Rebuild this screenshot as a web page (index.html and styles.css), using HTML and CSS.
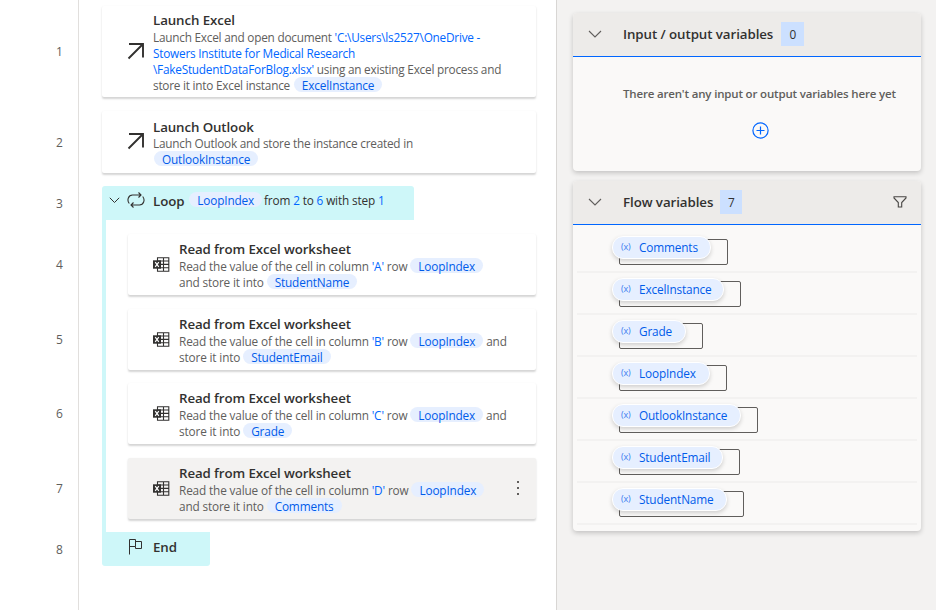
FILE: index.html
```html
<!DOCTYPE html>
<html lang="en">
<head>
<meta charset="utf-8">
<title>Flow designer</title>
<link rel="stylesheet" href="styles.css">
</head>
<body>
<svg class="defs" width="0" height="0" aria-hidden="true">
  <symbol id="arrow" viewBox="0 0 18 18"><path d="M2 2H16V15.5M16 2L1.5 16.5" fill="none" stroke="#323130" stroke-width="1.9"/></symbol>
  <symbol id="excel" viewBox="0 0 17 15"><path d="M4.5.7H15.8V14.2H4.5ZM4.5 4H15.8M4.5 7.4H15.8M4.5 10.8H15.8M10.5.7V14.2" fill="none" stroke="#323130" stroke-width="1.1"/><path d="M0 3.3H8V11.7H0Z" fill="#323130"/><path d="M2.2 5.2L5.8 9.8M5.8 5.2L2.2 9.8" stroke="#fff" stroke-width="1.2"/></symbol>
  <symbol id="chevron" viewBox="0 0 14 8"><path d="M1 1L7 7L13 1" fill="none" stroke="#605e5c" stroke-width="1.1"/></symbol>
</svg>
<div class="app">
  <main class="flow">
    <div class="row"><span class="num">1</span>
      <section class="card first"><svg class="arrow"><use href="#arrow"/></svg>
        <div class="text"><h3>Launch Excel</h3>
          <p>Launch Excel and open document <b>'C:\Users\ls2527\OneDrive -</b></p>
          <p><b>Stowers Institute for Medical Research</b></p>
          <p><b>\FakeStudentDataForBlog.xlsx'</b> using an existing Excel process and</p>
          <p>store it into Excel instance <span class="pill">ExcelInstance</span></p></div>
      </section></div>
    <div class="row"><span class="num">2</span>
      <section class="card second"><svg class="arrow"><use href="#arrow"/></svg>
        <div class="text"><h3>Launch Outlook</h3>
          <p>Launch Outlook and store the instance created in</p>
          <p><span class="pill">OutlookInstance</span></p></div>
      </section></div>
    <div class="row loop-row"><span class="num">3</span>
      <section class="block loop">
        <svg class="loop-chevron" viewBox="0 0 11 7"><path d="M.8.8L5.500 5.500L10.200.8" fill="none" stroke="#323130" stroke-width="1"/></svg>
        <svg class="loop-icon" viewBox="0 0 18 16"><path d="M2.300 11.500C-.5 8 1.500 3 5.500 3H14M11.500.5L14 3L11.500 5.500M15.700 4.500C18.500 8 16.500 13 12.500 13H4M6.500 10.500L4 13L6.500 15.500" fill="none" stroke="#323130" stroke-width="1.100"/></svg>
        <h3>Loop</h3>
        <p><span class="pill">LoopIndex</span> from <b>2</b> to <b>6</b> with step <b>1</b></p>
      </section></div>
    <div class="loop-body">
      <div class="row"><span class="num">4</span>
        <section class="card inner"><svg class="excel"><use href="#excel"/></svg>
          <div class="text"><h3>Read from Excel worksheet</h3>
            <p>Read the value of the cell in column <b>'A'</b> row <span class="pill">LoopIndex</span></p>
            <p>and store it into <span class="pill">StudentName</span></p></div>
        </section></div>
      <div class="row"><span class="num">5</span>
        <section class="card inner"><svg class="excel"><use href="#excel"/></svg>
          <div class="text"><h3>Read from Excel worksheet</h3>
            <p>Read the value of the cell in column <b>'B'</b> row <span class="pill">LoopIndex</span> and</p>
            <p>store it into <span class="pill">StudentEmail</span></p></div>
        </section></div>
      <div class="row"><span class="num">6</span>
        <section class="card inner"><svg class="excel"><use href="#excel"/></svg>
          <div class="text"><h3>Read from Excel worksheet</h3>
            <p>Read the value of the cell in column <b>'C'</b> row <span class="pill">LoopIndex</span> and</p>
            <p>store it into <span class="pill">Grade</span></p></div>
        </section></div>
      <div class="row"><span class="num">7</span>
        <section class="card inner hovered"><svg class="excel"><use href="#excel"/></svg>
          <div class="text"><h3>Read from Excel worksheet</h3>
            <p>Read the value of the cell in column <b>'D'</b> row <span class="pill">LoopIndex</span></p>
            <p>and store it into <span class="pill">Comments</span></p></div>
          <div class="more"><i></i><i></i><i></i></div>
        </section></div>
    </div>
    <div class="row end-row"><span class="num">8</span>
      <section class="block end">
        <svg class="flag" viewBox="0 0 15 17"><path d="M1.500 16.500V1.500H7.500V8.500H1.500M7.500 3.500H13.500V10.500H7.500V8.500" fill="none" stroke="#323130" stroke-width="1"/></svg>
        <h3>End</h3>
      </section></div>
  </main>
  <aside class="side">
    <section class="panel io">
      <header><svg class="chev"><use href="#chevron"/></svg><h2>Input / output variables</h2><span class="badge">0</span></header>
      <div class="empty"><p>There aren't any input or output variables here yet</p>
        <svg class="add" viewBox="0 0 17 17"><circle cx="8.500" cy="8.500" r="7.600"/><path d="M8.500 4.500V12.500M4.500 8.500H12.500"/></svg></div>
    </section>
    <section class="panel vars">
      <header><svg class="chev"><use href="#chevron"/></svg><h2>Flow variables</h2><span class="badge narrow">7</span>
        <svg class="filter" viewBox="0 0 14 12"><path d="M1 .700H13V2L8.700 6.500V11H5.300V6.500L1 2Z" fill="none" stroke="#484644" stroke-width="1.100"/></svg></header>
      <ul>
        <li><div class="outline" style="width:109px"><span class="chip"><i>(x)</i>Comments</span></div></li>
        <li><div class="outline" style="width:122px"><span class="chip"><i>(x)</i>ExcelInstance</span></div></li>
        <li><div class="outline" style="width:84px"><span class="chip"><i>(x)</i>Grade</span></div></li>
        <li><div class="outline" style="width:108px"><span class="chip"><i>(x)</i>LoopIndex</span></div></li>
        <li><div class="outline" style="width:139px"><span class="chip"><i>(x)</i>OutlookInstance</span></div></li>
        <li><div class="outline" style="width:121px"><span class="chip"><i>(x)</i>StudentEmail</span></div></li>
        <li><div class="outline" style="width:125px"><span class="chip"><i>(x)</i>StudentName</span></div></li>
      </ul>
    </section>
  </aside>
</div>
</body>
</html>
```
FILE: styles.css
```css
* { box-sizing: border-box; margin: 0; padding: 0; }
body { width: 936px; height: 610px; overflow: hidden; font-family: "Open Sans", "Noto Sans", sans-serif; font-size: 11.8px; letter-spacing: -0.15px; color: #605e5c; }
.defs { position: absolute; }
svg { flex: none; display: block; }
.app { display: flex; height: 610px; }
.flow { width: 557px; background: linear-gradient(90deg, transparent 78px, #e1dfdd 78px, #e1dfdd 79px, transparent 79px); border-right: 1px solid #d8d6d4; padding-top: 6px; }
.row { display: flex; align-items: center; margin-bottom: 14px; }
.num { width: 102px; padding-left: 56px; flex: none; font-size: 12px; }
.card { width: 433.5px; display: flex; background: #fff; border-radius: 2px; box-shadow: 0 1.5px 2px rgba(0,0,0,.17); }
.first { height: 91px; }
.second { height: 62px; }
.first p, .second p { letter-spacing: -0.23px; }
.first .pill, .second .pill { letter-spacing: -0.15px; }
.card .arrow { width: 18px; height: 18px; margin: auto 8px auto 25px; position: relative; top: -1px; }
.text { padding-top: 5px; white-space: nowrap; flex: 1; }
.second .text { padding-top: 7px; }
h3 { font-size: 13.3px; line-height: 18px; font-weight: 600; color: #323130; letter-spacing: -0.1px; }
.first h3 { line-height: 19px; margin-bottom: -1px; }
.second h3 { margin-bottom: -1px; }
p { line-height: 16px; height: 16px; white-space: nowrap; }
b { color: #0066ff; font-weight: 400; }
.pill { display: inline-block; height: 15px; line-height: 16px; border-radius: 8px; background: #e6efff; color: #005bea; padding: 0 8px; vertical-align: top; }
.block { height: 34px; background: #cef7f9; color: #323130; display: flex; align-items: center; }
.loop-row { margin-top: -1px; }
.loop { width: 312px; border-radius: 3px 3px 0 0; padding-left: 7px; }
.loop h3 { margin-top: -4px; }
.loop p { margin: -6px 0 0 4px; }
.first .pill, .second .pill, .loop .pill { margin-left: 1px; }
.loop .pill { margin-right: -1px; }
.loop-chevron { width: 11px; height: 7px; margin-top: -5px; }
.loop-icon { width: 18px; height: 16px; margin: 0 8px 6px 7px; }
.loop-body { position: relative; margin-top: -14px; padding-top: 14px; height: 312px; }
.loop-body::before { content: ""; position: absolute; left: 102px; top: 0; width: 3.5px; height: 312px; background: #cef7f9; }
.loop-body .row { margin-bottom: 13.5px; }
.inner { width: 407.5px; height: 61px; margin-left: 26px; }
.inner .text { padding-top: 6px; }
.excel { width: 17px; height: 15px; margin: auto 9px auto 25px; }
.hovered { background: #f3f2f1; }
.more { width: 36px; display: flex; flex-direction: column; align-items: center; justify-content: center; gap: 4px; }
.more i { width: 2px; height: 2px; background: #605e5c; }
.end { width: 108px; border-radius: 0 0 3px 3px; padding-left: 26px; }
.end h3 { line-height: 19px; margin-top: -3px; }
.flag { width: 15px; height: 17px; margin: 0 10px 5px 0; }
.side { width: 379px; background: #f3f2f1; padding: 13px 15px 0 16px; }
.panel { width: 348px; background: #faf9f8; border-radius: 4px; box-shadow: 0 2px 5px rgba(0,0,0,.2); margin-bottom: 10px; }
.panel header { height: 44px; background: #edebe9; border-bottom: 1px solid #0066ff; border-radius: 4px 4px 0 0; display: flex; align-items: center; padding: 0 14px 2px 15px; }
.chev { width: 14px; height: 8px; margin-right: 21px; }
h2 { font-size: 13.3px; font-weight: 600; color: #323130; letter-spacing: -0.07px; }
.badge { width: 23px; height: 24px; background: #cce0ff; color: #323130; text-align: center; line-height: 25px; margin-left: 8px; }
.narrow { width: 22px; margin-left: 7px; }
.filter { width: 14px; height: 12px; margin-left: auto; }
.io { height: 158px; }
.empty { padding: 29px 0 0 50px; }
.empty p { font-weight: 600; font-size: 11.5px; color: #605e5c; letter-spacing: -0.17px; }
.add { width: 17px; height: 17px; margin: 19.5px 0 0 128.5px; fill: none; stroke: #0066ff; stroke-width: 1.2; }
.vars { height: 350px; }
ul { list-style: none; padding: 6px 4px 0; }
li { height: 42px; border-bottom: 2px solid #f3f2f1; padding: 8px 0 0 42px; }
.outline { height: 26px; border: 1px solid #605e5c; border-radius: 2px; display: flex; align-items: flex-start; }
.chip { flex: 1; margin: -4px 16px 0 -8px; height: 23px; line-height: 20.5px; border: 1px solid #fff; border-radius: 11px; background: #e6efff; color: #005bea; box-shadow: 0 2px 4px rgba(0,0,0,.17); white-space: nowrap; display: flex; padding-left: 8px; }
.chip i { font-style: normal; font-size: 9px; width: 18px; line-height: 20px; color: #3b7df0; flex: none; }
```
